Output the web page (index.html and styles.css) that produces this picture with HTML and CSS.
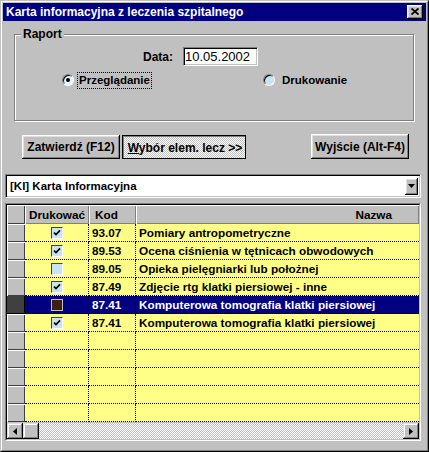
FILE: index.html
```html
<!DOCTYPE html>
<html lang="pl">
<head>
<meta charset="utf-8">
<title>Karta informacyjna z leczenia szpitalnego</title>
<link rel="stylesheet" href="styles.css">
</head>
<body>
<div class="window">
  <div class="frame">
    <div class="titlebar">
      <span class="title">Karta informacyjna z leczenia szpitalnego</span>
      <div class="close"><svg width="8" height="7" viewBox="0 0 8 7"><path d="M0.5 0.5 L7.5 6.5 M7.5 0.5 L0.5 6.5" stroke="#000" stroke-width="1.8" fill="none"/></svg></div>
    </div>
    <div class="content">
      <div class="group">
        <div class="legend">Raport</div>
        <div class="date-row">
          <span class="date-label">Data:</span>
          <div class="input">10.05.2002</div>
        </div>
        <div class="radio-row">
          <div class="radio first"><span class="radio-circle checked"></span><span class="radio-label focus">Przeglądanie</span></div>
          <div class="radio second"><span class="radio-circle"></span><span class="radio-label">Drukowanie</span></div>
        </div>
      </div>
      <div class="buttons">
        <div class="btn btn-zat">Zatwierdź (F12)</div>
        <div class="btn btn-wyb"><span><u>W</u>ybór elem. lecz &gt;&gt;</span></div>
        <div class="btn btn-wyj">Wyjście (Alt-F4)</div>
      </div>
      <div class="combo">
        <span class="combo-text">[KI] Karta Informacyjna</span>
        <div class="combo-btn"><svg width="7" height="4" viewBox="0 0 7 4"><path d="M0 0 H7 L3.5 4 Z" fill="#000"/></svg></div>
      </div>
      <div class="grid">
        <div class="grid-inner">
          <div class="row head">
            <div class="ind"></div>
            <div class="hcell center">Drukować</div>
            <div class="hcell kodh">Kod</div>
            <div class="hcell nazwah">Nazwa</div>
          </div>
          <div class="row">
            <div class="ind"></div>
            <div class="c druk"><span class="cb"><svg width="8" height="8" viewBox="0 0 8 8"><path d="M1 3.6 L3 5.6 L7 1.4" stroke="#000" stroke-width="1.7" fill="none"/></svg></span></div>
            <div class="c kod">93.07</div>
            <div class="c naz">Pomiary antropometryczne</div>
          </div>
          <div class="row">
            <div class="ind"></div>
            <div class="c druk"><span class="cb"><svg width="8" height="8" viewBox="0 0 8 8"><path d="M1 3.6 L3 5.6 L7 1.4" stroke="#000" stroke-width="1.7" fill="none"/></svg></span></div>
            <div class="c kod">89.53</div>
            <div class="c naz">Ocena ciśnienia w tętnicach obwodowych</div>
          </div>
          <div class="row">
            <div class="ind"></div>
            <div class="c druk"><span class="cb"></span></div>
            <div class="c kod">89.05</div>
            <div class="c naz">Opieka pielęgniarki lub położnej</div>
          </div>
          <div class="row">
            <div class="ind"></div>
            <div class="c druk"><span class="cb"><svg width="8" height="8" viewBox="0 0 8 8"><path d="M1 3.6 L3 5.6 L7 1.4" stroke="#000" stroke-width="1.7" fill="none"/></svg></span></div>
            <div class="c kod">87.49</div>
            <div class="c naz">Zdjęcie rtg klatki piersiowej - inne</div>
          </div>
          <div class="row sel">
            <div class="ind"></div>
            <div class="c druk"><span class="cb"></span></div>
            <div class="c kod">87.41</div>
            <div class="c naz">Komputerowa tomografia klatki piersiowej</div>
          </div>
          <div class="row">
            <div class="ind"></div>
            <div class="c druk"><span class="cb"><svg width="8" height="8" viewBox="0 0 8 8"><path d="M1 3.6 L3 5.6 L7 1.4" stroke="#000" stroke-width="1.7" fill="none"/></svg></span></div>
            <div class="c kod">87.41</div>
            <div class="c naz">Komputerowa tomografia klatki piersiowej</div>
          </div>
          <div class="row"><div class="ind"></div><div class="c druk"></div><div class="c kod"></div><div class="c naz"></div></div>
          <div class="row"><div class="ind"></div><div class="c druk"></div><div class="c kod"></div><div class="c naz"></div></div>
          <div class="row"><div class="ind"></div><div class="c druk"></div><div class="c kod"></div><div class="c naz"></div></div>
          <div class="row"><div class="ind"></div><div class="c druk"></div><div class="c kod"></div><div class="c naz"></div></div>
          <div class="row"><div class="ind"></div><div class="c druk"></div><div class="c kod"></div><div class="c naz"></div></div>
          <div class="hscroll">
            <div class="sb-btn"><svg width="4" height="7" viewBox="0 0 4 7"><path d="M4 0 V7 L0 3.5 Z" fill="#000"/></svg></div>
            <div class="sb-thumb"></div>
            <div class="sb-track"></div>
            <div class="sb-btn"><svg width="4" height="7" viewBox="0 0 4 7"><path d="M0 0 V7 L4 3.5 Z" fill="#000"/></svg></div>
          </div>
        </div>
      </div>
    </div>
  </div>
</div>
</body>
</html>
```

FILE: styles.css
```css
* { box-sizing: border-box; }
html, body { margin: 0; padding: 0; }
body {
  background: #c0c0c0;
  font-family: "Liberation Sans", Arial, sans-serif;
  font-weight: bold;
  font-size: 11.5px;
  color: #000;
}
.window {
  width: 429px;
  height: 452px;
  background: #c0c0c0;
  border: 1px solid;
  border-color: #c0c0c0 #000 #000 #c0c0c0;
}
.frame {
  height: 100%;
  border: 1px solid;
  border-color: #fff #808080 #808080 #fff;
  padding: 1px;
  display: flex;
  flex-direction: column;
}
.titlebar {
  height: 18px;
  flex: none;
  background: #000080;
  color: #fff;
  display: flex;
  align-items: center;
  padding-left: 3px;
  font-size: 12px;
}
.close {
  width: 16px;
  height: 14px;
  margin-left: auto;
  margin-right: 3px;
  background: #c0c0c0;
  box-shadow: inset -1px -1px #000, inset 1px 1px #fff, inset -2px -2px #808080, inset 2px 2px #dfdfdf;
  display: flex;
  align-items: center;
  justify-content: center;
  padding-bottom: 1px;
}
.content {
  flex: 1;
  display: flex;
  flex-direction: column;
}
.group {
  margin: 13px 12px 0 11px;
  height: 87px;
  flex: none;
  border: 1px solid #808080;
  box-shadow: inset 1px 1px #fff, 1px 1px #fff;
}
.legend {
  width: max-content;
  margin: -8px 0 0 6px;
  padding: 0 2px;
  background: #c0c0c0;
  line-height: 14px;
  font-size: 12px;
}
.date-row {
  display: flex;
  align-items: center;
  margin-top: 6px;
  padding-left: 128px;
  height: 19px;
  font-size: 12px;
}
.date-label { width: 40px; }
.input {
  width: 75px;
  height: 19px;
  background: #fff;
  font-weight: normal;
  font-size: 13px;
  padding-left: 1px;
  display: flex;
  align-items: center;
  border: 1px solid;
  border-color: #808080 #fff #fff #808080;
  box-shadow: inset 1px 1px #000, inset -1px -1px #c0c0c0;
}
.radio-row {
  display: flex;
  align-items: center;
  margin-top: 6px;
  padding-left: 47px;
  height: 16px;
}
.radio {
  display: flex;
  align-items: center;
  gap: 4px;
}
.radio.first { width: 201px; }
.radio.second { gap: 7px; }
.radio-circle {
  width: 12px;
  height: 12px;
  border-radius: 50%;
  background: #c8e4f0;
  border: 1px solid;
  border-color: #808080 #fff #fff #808080;
  box-shadow: inset 1px 1px #000;
  display: flex;
  align-items: center;
  justify-content: center;
}
.radio-circle.checked { background: #e6f2f8; }
.radio-circle.checked::after {
  content: "";
  width: 4px;
  height: 4px;
  border-radius: 50%;
  background: #000;
}
.radio-label { line-height: 13px; }
.radio-label.focus {
  outline: 1px dotted #000;
  padding: 1px 1px;
}
.buttons {
  display: flex;
  align-items: flex-start;
  margin-top: 13px;
  padding: 0 17px 0 19px;
  height: 25px;
  flex: none;
}
.btn {
  font-size: 12px;
  background: #c0c0c0;
  height: 24px;
  box-shadow: inset -1px -1px #000, inset 1px 1px #fff, inset -2px -2px #808080, inset 2px 2px #dfdfdf;
  display: flex;
  align-items: center;
  justify-content: center;
  white-space: nowrap;
}
.btn-zat { width: 98px; margin-top: 1px; }
.btn-wyb {
  width: 124px;
  margin-left: 2px;
  margin-top: 1px;
  border: 1px solid #000;
  box-shadow: inset 1px 1px #808080;
  background: repeating-conic-gradient(#c0c0c0 0 25%, #fff 0 50%) 0 0 / 2px 2px;
  padding: 2px 0 0 2px;
}
.btn-wyj { width: 98px; margin-left: auto; height: 25px; }
.combo {
  margin: 15px 5px 0 2px;
  height: 24px;
  flex: none;
  background: #fff;
  border: 1px solid;
  border-color: #808080 #fff #fff #808080;
  box-shadow: inset 1px 1px #000, inset -1px -1px #c0c0c0;
  display: flex;
  align-items: center;
  padding: 1px 2px 1px 4px;
}
.combo-btn {
  width: 13px;
  height: 17px;
  margin-left: auto;
  background: #c0c0c0;
  box-shadow: inset -1px -1px #000, inset 1px 1px #fff, inset -2px -2px #808080, inset 2px 2px #dfdfdf;
  display: flex;
  align-items: center;
  justify-content: center;
}
.grid {
  margin: 5px 5px 0 2px;
  height: 238px;
  flex: none;
  border: 1px solid;
  border-color: #808080 #fff #fff #808080;
  font-size: 11.75px;
}
.grid-inner {
  height: 100%;
  border: 1px solid;
  border-color: #000 #c0c0c0 #c0c0c0 #000;
  background: #c0c0c0;
  display: flex;
  flex-direction: column;
}
.row {
  display: grid;
  grid-template-columns: 18px 64px 47px 1fr;
  height: 18px;
  flex: none;
}
.row.head { height: 19px; }
.ind {
  background: #c0c0c0;
  box-shadow: inset 1px 1px #fff, inset -1px -1px #404040;
}
.row.sel .ind { background: #404040; box-shadow: inset -1px -1px #000; }
.hcell {
  background: #c0c0c0;
  box-shadow: inset 1px 1px #fff, inset -1px -1px #808080;
  display: flex;
  align-items: center;
  white-space: nowrap;
}
.hcell.center { justify-content: center; }
.kodh { padding-left: 6px; }
.nazwah { justify-content: flex-end; padding-right: 27px; }
.c {
  background: #ffff88;
  border-bottom: 1px dotted #000;
  display: flex;
  align-items: center;
  white-space: nowrap;
  overflow: hidden;
}
.c.druk { border-right: 1px dotted #000; justify-content: center; }
.c.kod { border-right: 1px dotted #000; padding-left: 3px; }
.c.naz { padding-left: 3px; }
.row.sel .c { background: #000080; color: #fff; }
.cb {
  width: 12px;
  height: 12px;
  background: #c8e4f0;
  border: 1px solid;
  border-color: #404040 #fff #fff #404040;
  display: flex;
  align-items: center;
  justify-content: center;
}
.row.sel .cb {
  background: #3f1f0f;
  border-color: #c0c0c0;
}
.hscroll {
  display: flex;
  height: 16px;
  margin-top: 1px;
  flex: none;
}
.sb-btn, .sb-thumb {
  width: 16px;
  height: 16px;
  background: #c0c0c0;
  box-shadow: inset -1px -1px #000, inset 1px 1px #dfdfdf, inset -2px -2px #808080, inset 2px 2px #fff;
  display: flex;
  align-items: center;
  justify-content: center;
}
.sb-track {
  flex: 1;
  background: repeating-conic-gradient(#c0c0c0 0 25%, #fff 0 50%) 0 0 / 2px 2px;
}
```
